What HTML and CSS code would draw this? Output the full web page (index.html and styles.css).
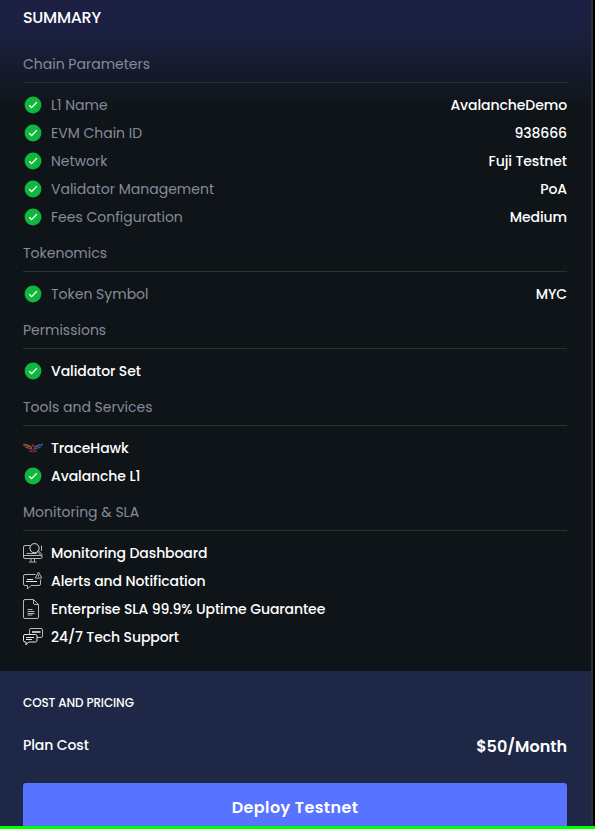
FILE: index.html
```html
<!DOCTYPE html>
<html lang="en">
<head>
    <meta charset="UTF-8">
    <meta name="viewport" content="width=device-width, initial-scale=1.0">
    <title>Deploy Summary</title>
    <link rel="stylesheet" href="styles.css">
</head>
<body>
    <svg class="sprite">
        <symbol id="check" viewBox="0 0 20 20">
            <circle cx="10" cy="10" r="8.4" fill="#0fb83d"/>
            <path d="M6.2 10.200l2.400 2.400L13.800 7.300" fill="none" stroke="#fff" stroke-width="1.300"/>
        </symbol>
    </svg>

    <div class="page">
        <main class="panel">
            <div class="summary">
                <h1>SUMMARY</h1>

                <section>
                    <h2>Chain Parameters</h2>
                    <ul>
                        <li><svg class="icon"><use href="#check"/></svg><span class="label">L1 Name</span><span class="value">AvalancheDemo</span></li>
                        <li><svg class="icon"><use href="#check"/></svg><span class="label">EVM Chain ID</span><span class="value">938666</span></li>
                        <li><svg class="icon"><use href="#check"/></svg><span class="label">Network</span><span class="value">Fuji Testnet</span></li>
                        <li><svg class="icon"><use href="#check"/></svg><span class="label">Validator Management</span><span class="value">PoA</span></li>
                        <li><svg class="icon"><use href="#check"/></svg><span class="label">Fees Configuration</span><span class="value">Medium</span></li>
                    </ul>
                </section>

                <section>
                    <h2>Tokenomics</h2>
                    <ul>
                        <li><svg class="icon"><use href="#check"/></svg><span class="label">Token Symbol</span><span class="value">MYC</span></li>
                    </ul>
                </section>

                <section>
                    <h2>Permissions</h2>
                    <ul>
                        <li><svg class="icon"><use href="#check"/></svg><span class="item">Validator Set</span></li>
                    </ul>
                </section>

                <section>
                    <h2>Tools and Services</h2>
                    <ul>
                        <li>
                            <svg class="icon hawk" viewBox="0 0 20 20">
                                <path class="left" d="M8.500 9C6.300 7.200 3.300 6.300.5 6.300c.7 2.200 2.600 3.600 5.500 3.900l2.500.3M2.500 7.300l5 2"/>
                                <path class="right" d="M11.500 9c2.200-1.800 5.200-2.700 8-2.700-.7 2.200-2.600 3.600-5.500 3.900l-2.500.3M17.500 7.300l-5 2"/>
                                <path class="body" d="M10 6.500l1.500 2.500-.5 2.800-1 1-1-1L8.500 9zM8.500 11.200l-2 2 3 .8M11.500 11.200l2 2-3 .8"/>
                            </svg>
                            <span class="item">TraceHawk</span>
                        </li>
                        <li><svg class="icon"><use href="#check"/></svg><span class="item">Avalanche L1</span></li>
                    </ul>
                </section>

                <section>
                    <h2>Monitoring &amp; SLA</h2>
                    <ul>
                        <li>
                            <svg class="icon line" viewBox="0 0 20 20">
                                <path d="M7 2.500H2Q.5 2.500.5 4v10q0 1.500 1.500 1.500h15.500q1.500 0 1.500-1.500v-1.500M.5 12.500H19M18.500 2.500V8M8 15.500v3M11.500 15.500v3M6 19h7.500M3.500 10.500h10"/>
                                <circle class="bright" cx="11.500" cy="5.200" r="4.600"/>
                                <path d="M14.500 8.800l1-1 3.500 3.700-1 1z"/>
                            </svg>
                            <span class="item">Monitoring Dashboard</span>
                        </li>
                        <li>
                            <svg class="icon line" viewBox="0 0 20 20">
                                <path d="M12.500 3.500H2Q.5 3.500.5 5v8q0 1.500 1.500 1.500h2.500V18L8 14.500h8q1.500 0 1.500-1.500V8.500"/>
                                <path d="M15.500 1l3.200 6h-6.400zM15.500 3.500v2"/>
                                <path class="bright" d="M4 8.500h6M3 10.500h11"/>
                            </svg>
                            <span class="item">Alerts and Notification</span>
                        </li>
                        <li>
                            <svg class="icon line" viewBox="0 0 20 20">
                                <path d="M10.500.5H2Q.5.5.5 2v16q0 1.500 1.500 1.500h12q1.500 0 1.500-1.500V5.500zM10.500.5V4q0 1.500 1.500 1.500h3.500"/>
                                <path d="M4.500 10.500h5M4.500 12.500h7M4.500 14.500h7M4.500 16h5"/>
                            </svg>
                            <span class="item">Enterprise SLA 99.9% Uptime Guarantee</span>
                        </li>
                        <li>
                            <svg class="icon line" viewBox="0 0 20 20">
                                <path d="M6.500 7.500V3q0-1.500 1.500-1.500h10q1.500 0 1.500 1.500v6q0 1.500-1.500 1.500h-4M9 4.500h8.500M9 5.500h8.500"/>
                                <path class="bright" d="M2 7.500h10.500q1.500 0 1.500 1.500v4.500q0 1.500-1.500 1.500H5.500L3 18v-3H2Q.5 15 .5 13.500V9Q.5 7.500 2 7.500zM3 10.500h8M3 12.500h6"/>
                            </svg>
                            <span class="item">24/7 Tech Support</span>
                        </li>
                    </ul>
                </section>
            </div>

            <div class="pricing">
                <h3>COST AND PRICING</h3>
                <div class="plan">
                    <span class="plan-name">Plan Cost</span>
                    <span class="price">$50/Month</span>
                </div>
                <button type="button">Deploy Testnet</button>
            </div>
        </main>
        <div class="bottom-bar"></div>
    </div>
</body>
</html>
```
FILE: styles.css
```css
* {
    margin: 0;
    padding: 0;
    box-sizing: border-box;
}

body {
    background: #000;
    color: #fff;
    font-family: Poppins, Inter, sans-serif;
    font-size: 14px;
    overflow: hidden;
}

.sprite {
    display: none;
}

.page {
    height: 831px;
    display: flex;
    flex-direction: column;
}

.panel {
    width: 593px;
    height: 826px;
    flex: none;
    border-right: 2px solid #2c2f33;
    display: flex;
    flex-direction: column;
    overflow: hidden;
}

.summary {
    height: 671px;
    flex: none;
    padding: 0 24px 0 23px;
    background: linear-gradient(#1c2143 0, #1c2143 26px, #0f1418 112px);
}

h1 {
    height: 42px;
    line-height: 35px;
    font-size: 16px;
    font-weight: 500;
    letter-spacing: -0.3px;
}

section {
    padding-top: 4px;
}

h2 {
    height: 37px;
    line-height: 36px;
    border-bottom: 1px solid #2b3033;
    margin-bottom: 8px;
    color: #868b9b;
    font-size: 14px;
    font-weight: 400;
}

ul {
    list-style-type: none;
}

li {
    height: 28px;
    display: flex;
    align-items: center;
    gap: 8px;
    white-space: nowrap;
}

.icon {
    width: 20px;
    height: 20px;
    flex: none;
}

.line {
    fill: none;
    stroke: #b5b7ba;
    stroke-width: 1;
}

.line .bright {
    stroke: #e6e6e6;
}

.hawk {
    fill: none;
    stroke-width: 0.9;
}

.hawk .left {
    stroke: #b4683c;
}

.hawk .right {
    stroke: #4b6ba3;
}

.hawk .body {
    stroke: #a83a50;
}

.label {
    color: #868b9b;
}

.value,
.item {
    font-weight: 500;
    letter-spacing: -0.09px;
}

.value {
    margin-left: auto;
}

.pricing {
    flex: 1;
    padding: 20px 24px 0 23px;
    background: #1e2746;
}

h3 {
    height: 24px;
    line-height: 24px;
    font-size: 12px;
    font-weight: 500;
    letter-spacing: -0.12px;
}

.plan {
    height: 24px;
    margin: 19px 0 25px;
    display: flex;
    align-items: center;
    justify-content: space-between;
    font-weight: 500;
}

.plan-name {
    margin-bottom: 2px;
    letter-spacing: -0.1px;
}

.price {
    font-size: 16px;
    font-weight: 600;
}

button {
    width: 100%;
    height: 48px;
    border: none;
    border-radius: 3px;
    background: #5873ff;
    color: #fff;
    font-family: inherit;
    font-size: 16px;
    font-weight: 600;
    letter-spacing: 0.4px;
    cursor: pointer;
}

.bottom-bar {
    height: 5px;
    background: #f0f0f0;
    border-top: 3px solid #00ff00;
}
```
